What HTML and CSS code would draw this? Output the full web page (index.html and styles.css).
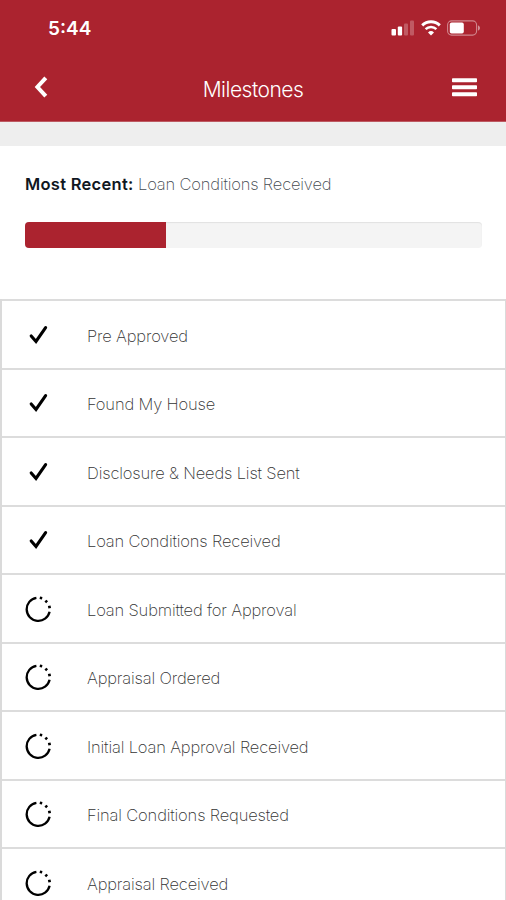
FILE: index.html
```
<!DOCTYPE html>
<html lang="en">
<head>
  <meta charset="UTF-8">
  <meta name="viewport" content="width=device-width, initial-scale=1.0">
  <title>Milestones</title>
  <link rel="stylesheet" href="styles.css">
</head>
<body>
<!-- Shared icons -->
<svg class="sprite" aria-hidden="true">
  <symbol id="check" viewBox="0 0 26 26">
    <path d="M6.2 13.9 L11 19.5 L20.6 5.6" fill="none" stroke="#000" stroke-width="3.1" stroke-linecap="round"/>
  </symbol>
  <symbol id="pending" viewBox="0 0 26 26">
    <path d="M11.4 1.8 A11.6 11.6 0 1 0 24.6 15.8" fill="none" stroke="#000" stroke-width="2.3"/>
    <path d="M14.8 1.8 L17.2 2.3 M20.4 4.6 L22.1 6.3 M24.2 9.8 L24.7 12.2" fill="none" stroke="#000" stroke-width="2.7"/>
  </symbol>
</svg>

<header class="header">
  <div class="status-bar">
    <span class="time">5:44</span>
    <div class="status-icons">
      <svg width="24" height="16" viewBox="0 0 24 16" fill="#fff">
        <rect x="0.5" y="9" width="4.5" height="6.5" rx="1"/>
        <rect x="6.8" y="6.5" width="4.3" height="9" rx="1"/>
        <rect x="13" y="3.5" width="4" height="12" rx="1" opacity="0.25"/>
        <rect x="19" y="0.5" width="4" height="15" rx="1" opacity="0.25"/>
      </svg>
      <svg width="20" height="16" viewBox="0 0 20 16">
        <path d="M1.2 5.4 A12.6 12.6 0 0 1 18.8 5.4" fill="none" stroke="#fff" stroke-width="2.9"/>
        <path d="M4.6 9.2 A7.8 7.8 0 0 1 15.4 9.2" fill="none" stroke="#fff" stroke-width="2.5"/>
        <path d="M10 15.6 L7 12.4 A4.3 4.3 0 0 1 13 12.4 Z" fill="#fff"/>
      </svg>
      <svg width="33" height="16" viewBox="0 0 33 16">
        <rect x="0.6" y="0.9" width="29" height="14.2" rx="4" fill="none" stroke="#fff" stroke-width="1.1" opacity="0.45"/>
        <rect x="2.8" y="2.6" width="14" height="11" rx="1.8" fill="#fff"/>
        <path d="M31 5.3 Q33 6.2 33 8 Q33 9.8 31 10.7 Z" fill="#fff" opacity="0.5"/>
      </svg>
    </div>
  </div>
  <nav class="nav-bar">
    <a class="back" href="#" aria-label="Back">
      <svg width="14" height="22" viewBox="0 0 14 22">
        <path d="M11.8 1.8 L3.4 11 L11.8 20.2" fill="none" stroke="#fff" stroke-width="4"/>
      </svg>
    </a>
    <h1 class="title">Milestones</h1>
    <a class="menu" href="#" aria-label="Menu">
      <svg width="25" height="19" viewBox="0 0 25 19" fill="#fff">
        <rect y="0.2" width="25" height="4" rx="0.8"/>
        <rect y="7.3" width="25" height="4" rx="0.8"/>
        <rect y="14.3" width="25" height="4" rx="0.8"/>
      </svg>
    </a>
  </nav>
</header>

<section class="summary">
  <p class="recent"><strong>Most Recent:</strong> <span>Loan Conditions Received</span></p>
  <div class="progress">
    <div class="progress-bar" style="width: 30.9%"></div>
  </div>
</section>

<ul class="milestones">
  <li><svg class="icon"><use href="#check"/></svg><span>Pre Approved</span></li>
  <li><svg class="icon"><use href="#check"/></svg><span>Found My House</span></li>
  <li><svg class="icon"><use href="#check"/></svg><span>Disclosure &amp; Needs List Sent</span></li>
  <li><svg class="icon"><use href="#check"/></svg><span>Loan Conditions Received</span></li>
  <li><svg class="icon"><use href="#pending"/></svg><span>Loan Submitted for Approval</span></li>
  <li><svg class="icon"><use href="#pending"/></svg><span>Appraisal Ordered</span></li>
  <li><svg class="icon"><use href="#pending"/></svg><span>Initial Loan Approval Received</span></li>
  <li><svg class="icon"><use href="#pending"/></svg><span>Final Conditions Requested</span></li>
  <li><svg class="icon"><use href="#pending"/></svg><span>Appraisal Received</span></li>
</ul>
</body>
</html>
```
FILE: styles.css
```
* {
  box-sizing: border-box;
}
body {
  margin: 0;
  height: 900px;
  overflow: hidden;
  background-color: #fff;
  font-family: Inter, "Liberation Sans", sans-serif;
}
svg {
  display: block;
}
.sprite {
  display: none;
}
/* Red header with status bar and navigation */
.header {
  height: 122px;
  background-color: #ab232f;
  border-bottom: 1px solid #bd5a62;
  color: #fff;
}
.status-bar {
  display: flex;
  justify-content: space-between;
  align-items: center;
  height: 56px;
  padding: 0 26px 0 48px;
}
.time {
  font-size: 19px;
  font-weight: 600;
}
.status-icons {
  display: flex;
  gap: 6px;
}
.nav-bar {
  display: grid;
  grid-template-columns: 60px 1fr 60px;
  align-items: center;
  height: 62px;
  padding: 0 29px 0 34px;
}
.title {
  margin: 4px 5px 0 0;
  font-size: 21px;
  font-weight: 300;
  letter-spacing: -0.5px;
  text-align: center;
}
.menu {
  justify-self: end;
}
/* Most recent milestone and progress */
.summary {
  height: 177.4px;
  padding: 28px 24px 0 25px;
  border-top: 24px solid #eeeeee;
}
.recent {
  margin: 0;
  font-size: 16.5px;
  line-height: 20px;
  font-weight: 200;
  letter-spacing: -0.17px;
  color: #444a50;
}
.recent strong {
  font-weight: 600;
  letter-spacing: 0.28px;
  color: #10171f;
}
.progress {
  height: 26px;
  margin-top: 28px;
  background-color: #f4f4f4;
  box-shadow: inset 0 1px 1px #e2e2e2;
  border-radius: 4px;
  overflow: hidden;
}
.progress-bar {
  height: 100%;
  background-color: #ab232f;
}
/* Milestone list */
.milestones {
  margin: 0;
  padding: 0;
  list-style: none;
  border-left: 2px solid #dadada;
  border-right: 1px solid #dadada;
}
.milestones li {
  display: flex;
  align-items: center;
  gap: 36px;
  height: 68.5px;
  padding-left: 23px;
  border-top: 2px solid #dcdcdc;
  font-size: 16.5px;
  font-weight: 200;
  letter-spacing: -0.16px;
  color: #333;
}
.milestones span {
  padding-top: 2px;
}
.icon {
  width: 26px;
  height: 26px;
}
```
